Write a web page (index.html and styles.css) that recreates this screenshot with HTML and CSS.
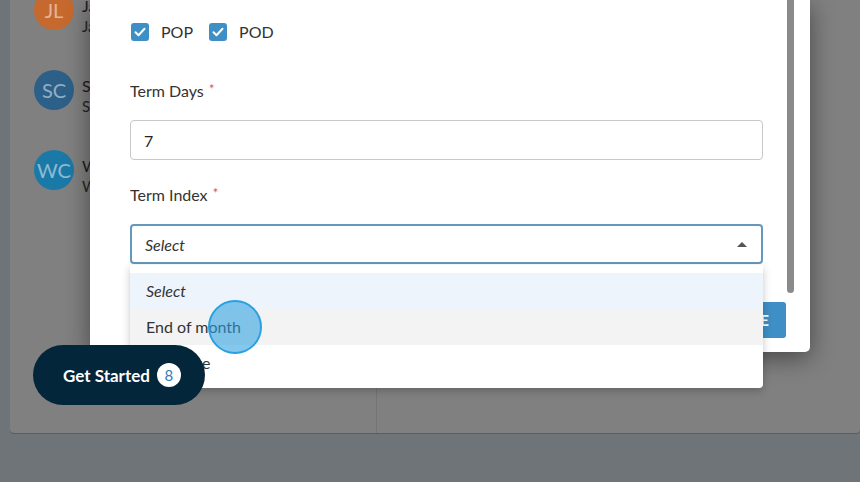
FILE: index.html
```html
<!DOCTYPE html>
<html lang="en">
<head>
<meta charset="utf-8">
<title>Terms</title>
<link rel="stylesheet" href="styles.css">
</head>
<body>
<div class="page">
  <div class="card">
    <aside class="list">
      <div class="person">
        <div class="avatar av-orange">JL</div>
        <div class="who"><div class="name">Jane Lewis</div><div class="mail">Jane Lewis Freight</div></div>
      </div>
      <div class="person">
        <div class="avatar av-navy">SC</div>
        <div class="who"><div class="name">Sam Carter</div><div class="mail">Sam Carter Logistics</div></div>
      </div>
      <div class="person">
        <div class="avatar av-blue">WC</div>
        <div class="who"><div class="name">Will Chen</div><div class="mail">Will Chen Transport</div></div>
      </div>
    </aside>
    <section class="detail"></section>
  </div>
</div>

<div class="modal">
  <div class="modal-body">
    <div class="checks">
      <label class="check"><span class="box"><svg viewBox="0 0 18 18" width="18" height="18"><path d="M4.5 9.2l3 3 6-6.4" fill="none" stroke="#fff" stroke-width="2" stroke-linecap="round" stroke-linejoin="round"/></svg></span>POP</label>
      <label class="check"><span class="box"><svg viewBox="0 0 18 18" width="18" height="18"><path d="M4.5 9.2l3 3 6-6.4" fill="none" stroke="#fff" stroke-width="2" stroke-linecap="round" stroke-linejoin="round"/></svg></span>POD</label>
    </div>
    <div class="field field-first">
      <div class="label">Term Days <span class="req">*</span></div>
      <div class="input">7</div>
    </div>
    <div class="field">
      <div class="label">Term Index <span class="req">*</span></div>
      <div class="select-wrap">
        <div class="select"><span>Select</span><span class="caret"></span></div>
        <ul class="menu">
          <li class="opt opt-selected">Select</li>
          <li class="opt opt-hover">End of month</li>
          <li class="opt">Due date</li>
        </ul>
      </div>
    </div>
    <div class="scrollbar"></div>
  </div>
  <div class="modal-footer">
    <button class="save">SAVE</button>
  </div>
</div>

<div class="click-dot"></div>

<button class="get-started">Get Started <span class="badge">8</span></button>
</body>
</html>
```

FILE: styles.css
```css
* { box-sizing: border-box; }

html, body {
  margin: 0;
  padding: 0;
}

body {
  width: 860px;
  height: 482px;
  overflow: hidden;
  background: #6f7479;
  font-family: Lato, "Open Sans", sans-serif;
  color: #333;
  position: relative;
}

.page {
  padding-left: 10px;
}

.card {
  margin-top: -30px;
  height: 463px;
  background: #808080;
  border-radius: 4px;
  box-shadow: 0 1px 0 #5c5c5c;
  display: flex;
  overflow: hidden;
}

.list {
  width: 367px;
  border-right: 1px solid #747474;
  padding-left: 24px;
}

.detail {
  flex: 1;
}

.person {
  height: 80px;
  display: flex;
  align-items: center;
  gap: 8px;
}

.avatar {
  width: 40px;
  height: 40px;
  border-radius: 50%;
  display: flex;
  align-items: center;
  justify-content: center;
  font-size: 20px;
  color: rgba(255, 255, 255, 0.5);
  flex: none;
}

.av-orange { background: #c6692e; }
.av-navy { background: #2c6088; }
.av-blue { background: #1b79a7; }

.who {
  padding-top: 11px;
  line-height: 21px;
  white-space: nowrap;
}

.name {
  font-size: 16px;
  color: #1e1e1e;
}

.mail {
  font-size: 15px;
  color: #262626;
}

/* modal */
.modal {
  position: absolute;
  left: 90px;
  top: 0;
  width: 720px;
  height: 352px;
  background: #fff;
  border-radius: 0 0 5px 5px;
  box-shadow: 0 6px 24px rgba(0, 0, 0, 0.45);
  display: flex;
  flex-direction: column;
}

.modal-body {
  position: relative;
  height: 293px;
  padding: 22px 47px 0 40px;
}

.scrollbar {
  position: absolute;
  right: 16px;
  top: 0;
  width: 7px;
  height: 293px;
  background: #8a8a8a;
  border-radius: 0 0 4px 4px;
}

.checks {
  display: flex;
  gap: 15px;
  height: 20px;
  align-items: center;
}

.check {
  display: flex;
  align-items: center;
  gap: 12px;
  font-size: 16px;
  color: #333;
  line-height: 20px;
}

.box {
  width: 18px;
  height: 18px;
  margin-left: 1px;
  background: #3d8fc6;
  border-radius: 3px;
  display: flex;
}

.field {
  margin-top: 26px;
}

.field-first {
  margin-top: 40px;
}

.label {
  font-size: 16px;
  line-height: 20px;
  height: 20px;
  color: #333;
  margin-bottom: 18px;
  position: relative;
  top: -1px;
}

.req {
  color: #d9534f;
  font-size: 13px;
  line-height: 0;
  position: relative;
  top: -3px;
  margin-left: 1px;
}

.input {
  height: 40px;
  border: 1px solid #c8c8c8;
  border-radius: 4px;
  padding-left: 13px;
  display: flex;
  align-items: center;
  font-size: 16px;
  color: #222;
}

.select-wrap {
  position: relative;
}

.select {
  height: 40px;
  border: 2px solid #6598bd;
  border-radius: 4px;
  padding: 0 13px;
  display: flex;
  align-items: center;
  justify-content: space-between;
  font-size: 16px;
  font-style: italic;
  color: #333;
}

.caret {
  width: 0;
  height: 0;
  border-left: 5px solid transparent;
  border-right: 5px solid transparent;
  border-bottom: 5px solid #555;
  margin-right: 1px;
}

.menu {
  position: absolute;
  left: 0;
  right: 0;
  top: 41px;
  margin: 0;
  padding: 8px 0 7px;
  list-style: none;
  background: #fff;
  border-radius: 0 0 4px 4px;
  box-shadow: 0 3px 8px rgba(0, 0, 0, 0.22);
  z-index: 2;
}

.opt {
  height: 36px;
  line-height: 36px;
  padding-left: 16px;
  font-size: 16px;
  color: #333;
}

.opt-selected {
  background: #eef4fb;
  font-style: italic;
}

.opt-hover {
  background: #f3f3f3;
}

.modal-footer {
  display: flex;
  justify-content: flex-end;
  padding: 9px 24px 0 0;
}

.save {
  height: 36px;
  width: 76px;
  border: none;
  border-radius: 3px;
  background: #3d8fc6;
  color: #fff;
  font-family: Lato, sans-serif;
  font-size: 15px;
  font-weight: 700;
  letter-spacing: 1px;
  padding: 0 16px 0 0;
  text-align: right;
}

.click-dot {
  position: absolute;
  left: 208px;
  top: 300px;
  width: 54px;
  height: 54px;
  border-radius: 50%;
  background: rgba(43, 160, 225, 0.58);
  border: 2px solid #2aa0e0;
  z-index: 3;
}

.get-started {
  position: absolute;
  left: 33px;
  top: 345px;
  width: 172px;
  height: 60px;
  border: none;
  border-radius: 30px;
  background: #03263b;
  color: #fff;
  font-family: Lato, sans-serif;
  font-size: 17px;
  font-weight: 700;
  display: flex;
  align-items: center;
  padding: 0 0 0 30px;
  gap: 7px;
  z-index: 4;
}

.badge {
  width: 24px;
  height: 24px;
  border-radius: 50%;
  background: #fff;
  color: #2e80b8;
  font-size: 15px;
  font-weight: 400;
  display: flex;
  align-items: center;
  justify-content: center;
}
```
